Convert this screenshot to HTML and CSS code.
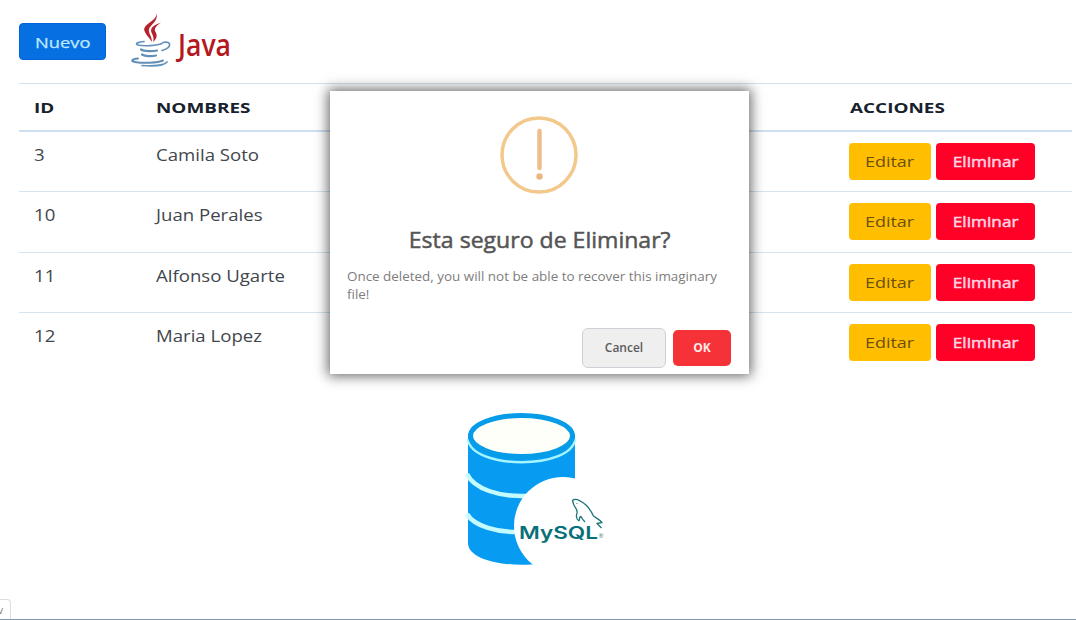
FILE: index.html
```html
<!DOCTYPE html>
<html lang="es">
<head>
<meta charset="utf-8">
<title>Personas</title>
<link rel="stylesheet" href="styles.css">
</head>
<body>
<main class="page">
  <header class="toolbar">
    <button class="btn btn-new"><span class="wide">Nuevo</span></button>
    <svg class="java" viewBox="0 0 104 60" width="104" height="60" role="img" aria-label="Java">
      <g fill="#b5222b">
        <path d="M27.500 4.500C29 13 13 16 15.500 23C16.500 26 19.500 29 23 34C23 28 19 25 20 21C21 17 30 13 27.500 4.500Z"/>
        <path d="M32 14.500C25 17 20.500 20 22.500 24.500C23.500 27 25.500 30 24 34C28 31 28.500 27 26.500 24C24.500 21 27 18 32 14.500Z"/>
      </g>
      <g fill="none" stroke="#6390b8" stroke-width="1.700" stroke-linecap="round">
        <path d="M15 33.500C10 34 5 35.500 9 37C15 38.500 28 37.500 33 35.500"/>
        <path d="M34 34.500C43 32.500 43 40 33 42.500"/>
        <path stroke-width="2.200" d="M12 41.500C15 43.500 24 43.500 28 42.500"/>
        <path stroke-width="2.200" d="M13 46.500C16 48.500 23 48.500 27 47.500"/>
        <path stroke-width="2" d="M9 50.500C3 51 1 53 6 54C14 55.500 29 55 34 52.500"/>
        <path d="M13 57.500C24 58.500 35 57.500 38 54"/>
      </g>
      <text class="java-text" x="49" y="47.500" textLength="53" lengthAdjust="spacingAndGlyphs">Java</text>
    </svg>
  </header>

  <table class="people">
    <thead>
      <tr><th class="c-id"><span class="wide">ID</span></th><th class="c-name"><span class="wide">NOMBRES</span></th><th class="c-act"><span class="wide">ACCIONES</span></th></tr>
    </thead>
    <tbody>
      <tr><td><span class="wide">3</span></td><td><span class="wide">Camila Soto</span></td><td><div class="actions"><button class="btn btn-edit"><span class="wide">Editar</span></button><button class="btn btn-del"><span class="wide">Eliminar</span></button></div></td></tr>
      <tr><td><span class="wide">10</span></td><td><span class="wide">Juan Perales</span></td><td><div class="actions"><button class="btn btn-edit"><span class="wide">Editar</span></button><button class="btn btn-del"><span class="wide">Eliminar</span></button></div></td></tr>
      <tr><td><span class="wide">11</span></td><td><span class="wide">Alfonso Ugarte</span></td><td><div class="actions"><button class="btn btn-edit"><span class="wide">Editar</span></button><button class="btn btn-del"><span class="wide">Eliminar</span></button></div></td></tr>
      <tr><td><span class="wide">12</span></td><td><span class="wide">Maria Lopez</span></td><td><div class="actions"><button class="btn btn-edit"><span class="wide">Editar</span></button><button class="btn btn-del"><span class="wide">Eliminar</span></button></div></td></tr>
    </tbody>
  </table>

  <svg class="database" viewBox="0 0 150 165" width="150" height="165" role="img" aria-label="MySQL">
    <path fill="#079cf2" d="M3 31H110V138C110 167 3 167 3 138Z"/>
    <g fill="none">
      <path stroke="#a6f5fd" stroke-width="2.500" d="M3 34C6 65 107 65 110 34"/>
      <path stroke="#c3fbff" stroke-width="4.500" d="M2 69C9 84 34 92 62 91"/>
      <path stroke="#c3fbff" stroke-width="4.500" d="M2 109C9 121 32 128 58 127"/>
    </g>
    <ellipse cx="56.500" cy="31" rx="51" ry="20.500" fill="#fffffa" stroke="#079ce8" stroke-width="5"/>
    <circle cx="98" cy="121" r="49" fill="#fff"/>
    <path fill="#fff" d="M69 150L68 165H120V130Z"/>
    <text class="mysql-text" x="54" y="133.500" textLength="79" lengthAdjust="spacingAndGlyphs">MySQL</text>
    <text class="mysql-mark" x="133.500" y="133">®</text>
    <path fill="none" stroke="#1b7478" stroke-width="1.300" stroke-linejoin="round" d="M114 116C111 114 111 111 112 108C113 104 109 102 108.500 99L107.500 95.500C110 93 115 95 121 100C125 104 127 108 128.500 111C131 113 134 114 137 117.500L132 118.500L136.500 123M114 116C115 113 114 112 116 111.500C117 114 118 115 120 117"/>
    <circle cx="112" cy="98.500" r=".6" fill="#1b7478"/>
  </svg>

  <footer class="status"><span class="tab">v</span></footer>
</main>

<section class="dialog" role="dialog">
  <svg class="warning" viewBox="0 0 78 78" width="78" height="78">
    <circle cx="39" cy="39" r="37" fill="none" stroke="#f3c88b" stroke-width="3.500"/>
    <path d="M39.500 15V52" stroke="#edbd8c" stroke-width="4.500" stroke-linecap="round"/>
    <circle cx="39.500" cy="60.500" r="3.200" fill="#edb67d"/>
  </svg>
  <h2 class="dialog-title"><span class="fit-title">Esta seguro de Eliminar?</span></h2>
  <p class="dialog-text"><span class="fit-text">Once deleted, you will not be able to recover this imaginary<br>file!</span></p>
  <div class="dialog-actions">
    <button class="dbtn cancel">Cancel</button>
    <button class="dbtn ok">OK</button>
  </div>
</section>
</body>
</html>
```
FILE: styles.css
```css
* { box-sizing: border-box; }
body {
  margin: 0;
  background: #fff;
  color: #41464c;
  font: 15.5px/20px "Open Sans", "Noto Sans", sans-serif;
}
.page {
  display: flex;
  flex-direction: column;
  height: 620px;
  overflow: hidden;
}
.toolbar {
  display: flex;
  align-items: flex-start;
  height: 83px;
  padding: 7px 0 0 19px;
}
.java { margin: 1px 0 0 23px; overflow: visible; }
.java-text { font: 600 30px "Open Sans", sans-serif; fill: #b41820; }
.wide {
  display: inline-block;
  white-space: nowrap;
  transform: scaleX(1.2);
  transform-origin: left center;
}
.btn {
  display: flex;
  align-items: center;
  justify-content: center;
  height: 37px;
  padding: 0 0 1px;
  border: 0;
  border-radius: 4px;
  font: 15px/20px "Open Sans", sans-serif;
}
.btn .wide { transform-origin: center; }
.btn-new { width: 87px; margin-top: 16px; padding: 0; background: #0670e3; color: #bfe9ff; border: 1px solid #0064d8; }
.btn-new .wide { transform: scaleX(1.22); -webkit-text-stroke: .25px #bfe9ff; }
.btn-edit { width: 82px; background: #ffbf00; color: #6b5012; }
.btn-del { width: 99px; background: #ff0026; color: #ffd3e0; }
.btn-del .wide { transform: scaleX(1.15); -webkit-text-stroke: .5px #ffd3e0; }
.people {
  width: 1053px;
  margin-left: 19px;
  border-collapse: separate;
  border-spacing: 0;
  table-layout: fixed;
}
.people th {
  height: 49px;
  padding: 0 0 0 15px;
  border-top: 1px solid #d7e1ed;
  border-bottom: 2px solid #cedff1;
  text-align: left;
  font-weight: 700;
  font-size: 15px;
  color: #17222e;
}
.people th .wide { transform: scaleX(1.26); }
.people td {
  height: 60.5px;
  padding: 11px 0 0 15px;
  border-bottom: 1px solid #d3e3f0;
  vertical-align: top;
}
.people tbody tr:first-child td { height: 60px; }
.people tr:last-child td { border-bottom: 0; }
.people td > .wide { padding-top: 2px; }
.c-id { width: 122px; }
.c-name { width: 694px; }
.actions { display: flex; gap: 5px; margin-left: -1px; }
.database { margin: 31.5px 0 0 465px; flex: none; }
.mysql-text { font: 600 17.5px "Inter", sans-serif; fill: #087078; }
.mysql-mark { font: 6px "Open Sans", sans-serif; fill: #398084; }
.status {
  margin-top: auto;
  height: 21px;
  border-bottom: 1px solid #8199a8;
  flex: none;
}
.tab {
  display: block;
  width: 11px;
  height: 20px;
  border: 1px solid #ddd;
  border-width: 1px 1px 0 0;
  border-radius: 0 4px 0 0;
  font-size: 10px;
  text-indent: -2px;
  color: #777;
}
.dialog {
  position: absolute;
  left: 330px;
  top: 91px;
  width: 419px;
  height: 283px;
  padding: 25px 17px 6px 17px;
  display: flex;
  flex-direction: column;
  background: #fff;
  box-shadow: 0 0 12px 2px rgba(0, 0, 0, .6);
}
.warning { align-self: center; flex: none; margin-right: 1px; }
.dialog-title { margin: 30px 0 0; text-align: center; font: 500 22.500px/32px "Open Sans", sans-serif; color: #555; }
.fit-title { display: inline-block; white-space: nowrap; transform: scaleX(1.025); -webkit-text-stroke: .5px #555; }
.dialog-text { margin: 11px 0 0; font: 13.500px/18px "Open Sans", sans-serif; color: #7d7d7d; }
.fit-text { display: inline-block; white-space: nowrap; transform: scaleX(.994); transform-origin: left; }
.dialog-actions { display: flex; justify-content: flex-end; align-items: center; gap: 7px; margin-top: auto; padding-right: 1px; }
.dbtn { border: 0; border-radius: 5px; padding: 0; font: 600 12px/18px "Open Sans", sans-serif; }
.cancel { width: 84px; height: 40px; background: #efefef; border: 1px solid #cdd1d8; color: #5c5c5c; border-radius: 6px; }
.ok { width: 58px; height: 36px; background: #f43237; color: #ffe8e8; font-weight: 700; }
```
